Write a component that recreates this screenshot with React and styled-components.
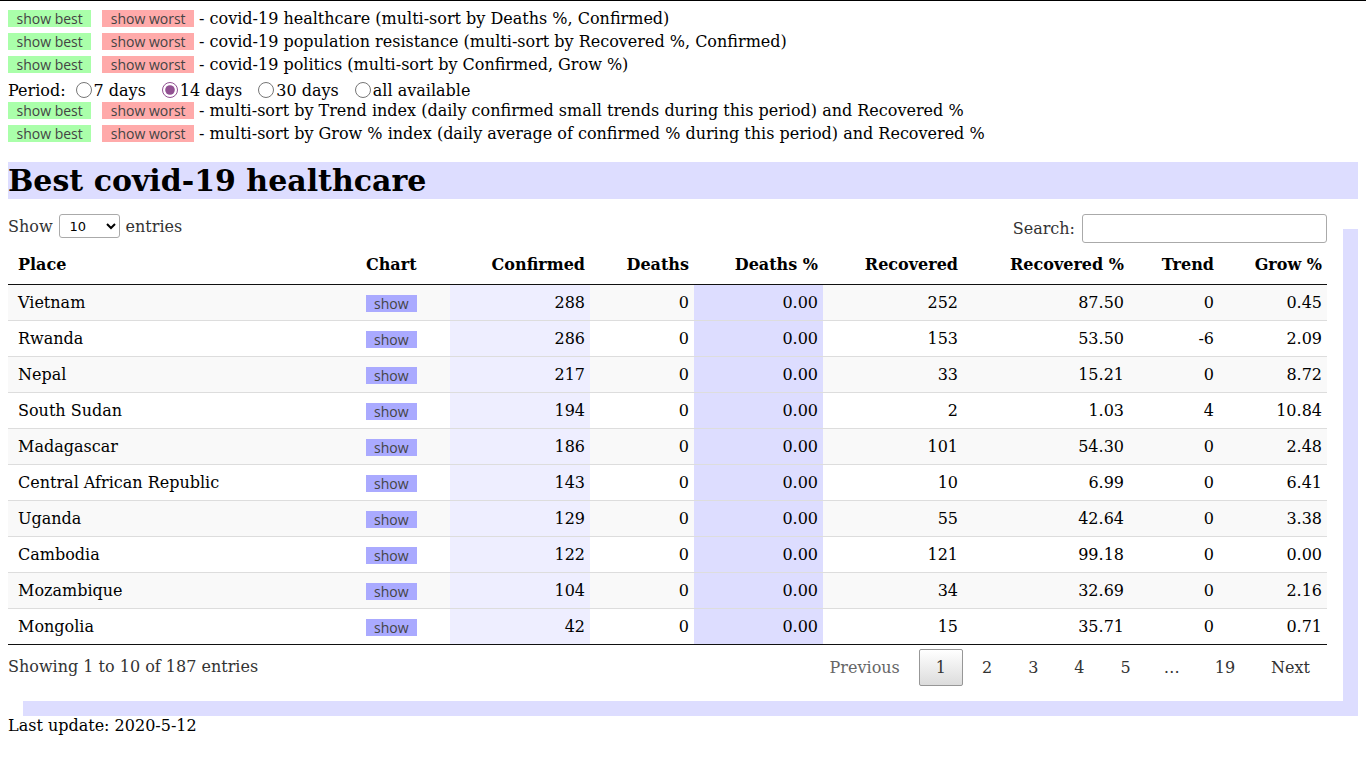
import React from "react";
import styled, { createGlobalStyle } from "styled-components";

const Global = createGlobalStyle`
  html { border-top: 1px solid #000; }
  body {
    margin: 6px 8px 8px 8px;
    font-family: "DejaVu Serif", "Liberation Serif", serif;
    font-size: 16px;
    color: #000;
    background: #fff;
  }
`;

const ActionRow = styled.div`
  display: flex;
  align-items: center;
  height: 23px;
  white-space: nowrap;
`;

const SortBtn = styled.span`
  display: inline-block;
  height: 17px;
  line-height: 17px;
  padding: 0 8.5px;
  margin-right: ${(p) => (p.$gap ? "11px" : "0")};
  font-family: "Open Sans", "DejaVu Sans", sans-serif;
  font-size: 14px;
  color: #444;
  background: ${(p) => (p.$kind === "best" ? "#aaffaa" : "#ffaaaa")};
  cursor: pointer;
`;

const Desc = styled.span`
  margin-left: 5px;
`;

const PeriodRow = styled.div`
  display: flex;
  align-items: center;
  height: 18px;
  margin-top: 5px;
  white-space: nowrap;
`;

const PeriodLabel = styled.label`
  display: inline-flex;
  align-items: center;
  margin-left: ${(p) => (p.$first ? "6px" : "12px")};
`;

const Radio = styled.input`
  width: 16px;
  height: 16px;
  margin: 0 2px 0 4px;
  accent-color: #915091;
`;

const Title = styled.h1`
  margin: 17px 0 0 0;
  background: #ddddff;
  font-size: 30px;
  line-height: 37px;
  height: 37px;
  font-weight: bold;
`;

const Wrapper = styled.div`
  margin: 15px 15px 0 0;
  padding: 0 16px 15px 0;
  background: #fff;
  box-shadow: 15px 15px 0 #ddddff;
`;

const TopControls = styled.div`
  display: flex;
  justify-content: space-between;
  align-items: flex-start;
  height: 30px;
  color: #333;
`;

const LengthLabel = styled.label`
  display: flex;
  align-items: center;
  height: 24px;
  gap: 6px;
`;

const Select = styled.select`
  width: 61px;
  height: 24px;
  border: 1px solid #aaa;
  border-radius: 3px;
  background: #fff;
  padding: 0 4px 0 6px;
  font-family: "DejaVu Sans", "Liberation Sans", sans-serif;
  font-size: 13px;
  color: #000;
`;

const SearchLabel = styled.label`
  display: flex;
  align-items: center;
  gap: 7px;
  height: 29px;
`;

const SearchInput = styled.input`
  box-sizing: border-box;
  width: 245px;
  height: 29px;
  border: 1px solid #aaa;
  border-radius: 3px;
  padding: 5px;
  background: #fff;
`;

const Table = styled.table`
  width: 100%;
  table-layout: fixed;
  border-collapse: collapse;
  border-spacing: 0;
`;

const Th = styled.th`
  padding: 11px 5px 9px 10px;
  line-height: 20px;
  text-align: ${(p) => (p.$left ? "left" : "right")};
  font-weight: bold;
  border-bottom: 1px solid #111;
  white-space: nowrap;
`;

const Tr = styled.tr`
  background: ${(p) => (p.$odd ? "#f9f9f9" : "#fff")};
`;

const Td = styled.td`
  padding: 8px 5px 8px 10px;
  line-height: 19px;
  height: 19px;
  text-align: ${(p) => (p.$left ? "left" : "right")};
  border-bottom: 1px solid ${(p) => (p.$last ? "#111" : "#ddd")};
  background: ${(p) =>
    p.$hl === "strong" ? "#ddddff" : p.$hl === "light" ? "#eeeeff" : "transparent"};
  white-space: nowrap;
`;

const ChartBtn = styled.span`
  display: inline-block;
  vertical-align: middle;
  height: 17px;
  line-height: 17px;
  padding: 0 8px;
  background: #aaaaff;
  color: #444;
  font-family: "Open Sans", "DejaVu Sans", sans-serif;
  font-size: 14px;
  cursor: pointer;
`;

const Footer = styled.div`
  display: flex;
  justify-content: space-between;
  align-items: flex-start;
`;

const Info = styled.div`
  padding-top: 12px;
  line-height: 19px;
  color: #333;
`;

const Paginate = styled.div`
  display: flex;
  align-items: center;
  padding-top: 4px;
`;

const PageBtn = styled.a`
  display: inline-block;
  box-sizing: border-box;
  padding: 8px 16px;
  margin-left: 2px;
  line-height: 19px;
  border: 1px solid ${(p) => (p.$current ? "#979797" : "transparent")};
  border-radius: 2px;
  color: ${(p) => (p.$disabled ? "#666" : "#333")};
  background: ${(p) =>
    p.$current ? "linear-gradient(to bottom, #ffffff 0%, #dcdcdc 100%)" : "transparent"};
  cursor: pointer;
`;

const Ellipsis = styled.span`
  padding: 0 16px;
  line-height: 19px;
  color: #333;
`;

const LastUpdate = styled.div`
  margin-top: 15px;
  line-height: 19px;
`;

const actions1 = [
  "- covid-19 healthcare (multi-sort by Deaths %, Confirmed)",
  "- covid-19 population resistance (multi-sort by Recovered %, Confirmed)",
  "- covid-19 politics (multi-sort by Confirmed, Grow %)",
];
const actions2 = [
  "- multi-sort by Trend index (daily confirmed small trends during this period) and Recovered %",
  "- multi-sort by Grow % index (daily average of confirmed % during this period) and Recovered %",
];

const rows = [
  ["Vietnam", "288", "0", "0.00", "252", "87.50", "0", "0.45"],
  ["Rwanda", "286", "0", "0.00", "153", "53.50", "-6", "2.09"],
  ["Nepal", "217", "0", "0.00", "33", "15.21", "0", "8.72"],
  ["South Sudan", "194", "0", "0.00", "2", "1.03", "4", "10.84"],
  ["Madagascar", "186", "0", "0.00", "101", "54.30", "0", "2.48"],
  ["Central African Republic", "143", "0", "0.00", "10", "6.99", "0", "6.41"],
  ["Uganda", "129", "0", "0.00", "55", "42.64", "0", "3.38"],
  ["Cambodia", "122", "0", "0.00", "121", "99.18", "0", "0.00"],
  ["Mozambique", "104", "0", "0.00", "34", "32.69", "0", "2.16"],
  ["Mongolia", "42", "0", "0.00", "15", "35.71", "0", "0.71"],
];

const widths = [348, 94, 140, 104, 129, 140, 166, 90, 108];

function Action({ text }) {
  return (
    <ActionRow>
      <SortBtn $kind="best" $gap>show best</SortBtn>
      <SortBtn $kind="worst">show worst</SortBtn>
      <Desc>{text}</Desc>
    </ActionRow>
  );
}

export default function App() {
  const periods = ["7 days", "14 days", "30 days", "all available"];
  return (
    <>
      <Global />
      {actions1.map((t) => (
        <Action key={t} text={t} />
      ))}
      <PeriodRow>
        Period:
        {periods.map((p, i) => (
          <PeriodLabel key={p} $first={i === 0}>
            <Radio type="radio" name="period" defaultChecked={i === 1} />
            {p}
          </PeriodLabel>
        ))}
      </PeriodRow>
      {actions2.map((t) => (
        <Action key={t} text={t} />
      ))}
      <Title>Best covid-19 healthcare</Title>
      <Wrapper>
        <TopControls>
          <LengthLabel>
            Show
            <Select defaultValue="10">
              <option value="10">10</option>
              <option value="25">25</option>
              <option value="50">50</option>
              <option value="100">100</option>
            </Select>
            entries
          </LengthLabel>
          <SearchLabel>
            Search:
            <SearchInput type="search" />
          </SearchLabel>
        </TopControls>
        <Table>
          <colgroup>
            {widths.map((w, i) => (
              <col key={i} style={{ width: w }} />
            ))}
          </colgroup>
          <thead>
            <tr>
              <Th $left>Place</Th>
              <Th $left>Chart</Th>
              <Th>Confirmed</Th>
              <Th>Deaths</Th>
              <Th>Deaths %</Th>
              <Th>Recovered</Th>
              <Th>Recovered %</Th>
              <Th>Trend</Th>
              <Th>Grow %</Th>
            </tr>
          </thead>
          <tbody>
            {rows.map((r, i) => {
              const last = i === rows.length - 1;
              return (
                <Tr key={r[0]} $odd={i % 2 === 0}>
                  <Td $left $last={last}>{r[0]}</Td>
                  <Td $left $last={last}>
                    <ChartBtn>show</ChartBtn>
                  </Td>
                  <Td $last={last} $hl="light">{r[1]}</Td>
                  <Td $last={last}>{r[2]}</Td>
                  <Td $last={last} $hl="strong">{r[3]}</Td>
                  <Td $last={last}>{r[4]}</Td>
                  <Td $last={last}>{r[5]}</Td>
                  <Td $last={last}>{r[6]}</Td>
                  <Td $last={last}>{r[7]}</Td>
                </Tr>
              );
            })}
          </tbody>
        </Table>
        <Footer>
          <Info>Showing 1 to 10 of 187 entries</Info>
          <Paginate>
            <PageBtn $disabled>Previous</PageBtn>
            <PageBtn $current>1</PageBtn>
            <PageBtn>2</PageBtn>
            <PageBtn>3</PageBtn>
            <PageBtn>4</PageBtn>
            <PageBtn>5</PageBtn>
            <Ellipsis>…</Ellipsis>
            <PageBtn>19</PageBtn>
            <PageBtn>Next</PageBtn>
          </Paginate>
        </Footer>
      </Wrapper>
      <LastUpdate>Last update: 2020-5-12</LastUpdate>
    </>
  );
}
